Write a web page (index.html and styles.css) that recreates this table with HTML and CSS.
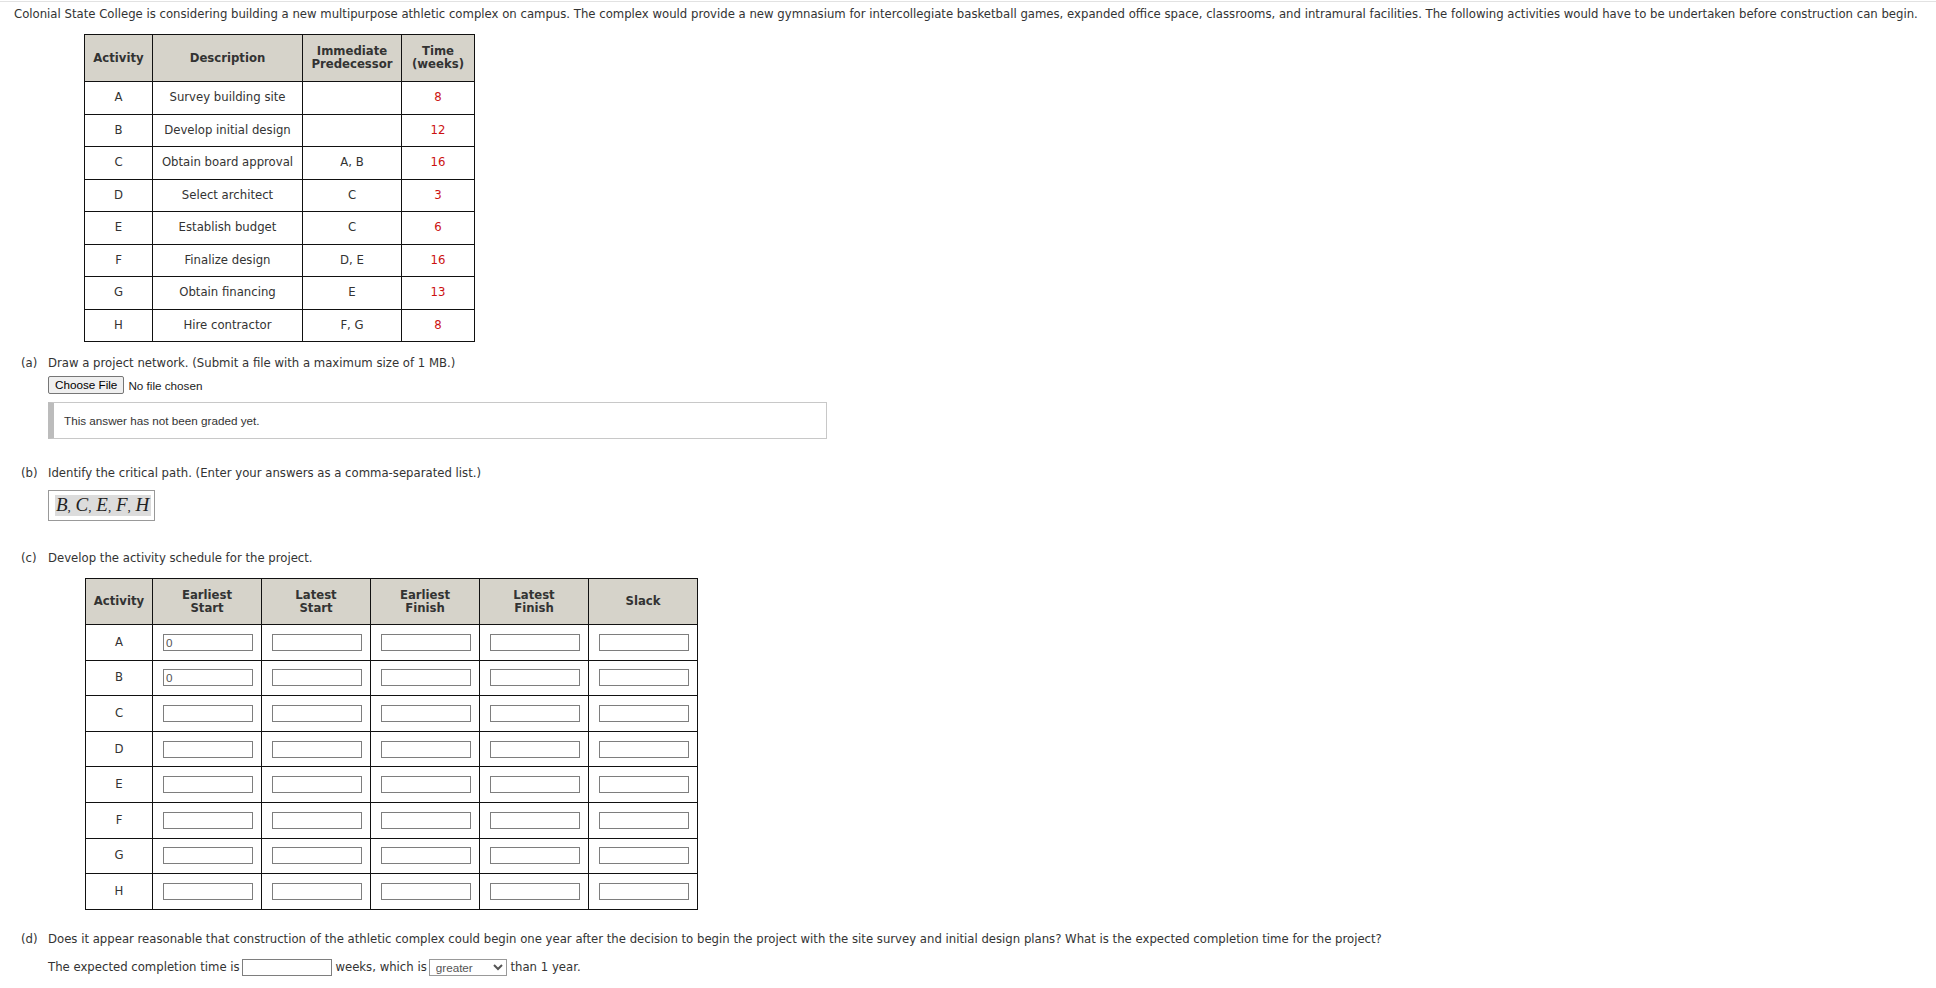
FILE: index.html
```html
<!DOCTYPE html>
<html>
<head>
<meta charset="utf-8">
<link rel="stylesheet" href="styles.css">
</head>
<body>
<div class="page">
  <p class="intro">Colonial State College is considering building a new multipurpose athletic complex on campus. The complex would provide a new gymnasium for intercollegiate basketball games, expanded office space, classrooms, and intramural facilities. The following activities would have to be undertaken before construction can begin.</p>

  <table class="grid activities">
    <colgroup><col class="c1"><col class="c2"><col class="c3"><col class="c4"></colgroup>
    <thead>
      <tr><th>Activity</th><th>Description</th><th>Immediate<br>Predecessor</th><th>Time<br>(weeks)</th></tr>
    </thead>
    <tbody>
      <tr><td>A</td><td>Survey building site</td><td></td><td class="red">8</td></tr>
      <tr><td>B</td><td>Develop initial design</td><td></td><td class="red">12</td></tr>
      <tr><td>C</td><td>Obtain board approval</td><td>A, B</td><td class="red">16</td></tr>
      <tr><td>D</td><td>Select architect</td><td>C</td><td class="red">3</td></tr>
      <tr><td>E</td><td>Establish budget</td><td>C</td><td class="red">6</td></tr>
      <tr><td>F</td><td>Finalize design</td><td>D, E</td><td class="red">16</td></tr>
      <tr><td>G</td><td>Obtain financing</td><td>E</td><td class="red">13</td></tr>
      <tr><td>H</td><td>Hire contractor</td><td>F, G</td><td class="red">8</td></tr>
    </tbody>
  </table>

  <div class="q qa">
    <span class="qlabel">(a)</span>
    <div class="qbody">
      <div class="qtext">Draw a project network. (Submit a file with a maximum size of 1 MB.)</div>
      <div class="file"><span class="filebtn">Choose File</span><span class="filename">No file chosen</span></div>
      <div class="graded">This answer has not been graded yet.</div>
    </div>
  </div>

  <div class="q qb">
    <span class="qlabel">(b)</span>
    <div class="qbody">
      <div class="qtext">Identify the critical path. (Enter your answers as a comma-separated list.)</div>
      <div class="answer"><span class="hl"><i>B</i><span class="cm">,</span> <i>C</i><span class="cm">,</span> <i>E</i><span class="cm">,</span> <i>F</i><span class="cm">,</span> <i>H</i></span></div>
    </div>
  </div>

  <div class="q qc">
    <span class="qlabel">(c)</span>
    <div class="qbody">
      <div class="qtext">Develop the activity schedule for the project.</div>
    </div>
  </div>

  <table class="grid schedule">
    <colgroup><col class="s1"><col class="s2"><col class="s2"><col class="s2"><col class="s2"><col class="s2"></colgroup>
    <thead>
      <tr><th>Activity</th><th>Earliest<br>Start</th><th>Latest<br>Start</th><th>Earliest<br>Finish</th><th>Latest<br>Finish</th><th>Slack</th></tr>
    </thead>
    <tbody>
      <tr><td>A</td><td><input class="cell" value="0"></td><td><input class="cell"></td><td><input class="cell"></td><td><input class="cell"></td><td><input class="cell"></td></tr>
      <tr><td>B</td><td><input class="cell" value="0"></td><td><input class="cell"></td><td><input class="cell"></td><td><input class="cell"></td><td><input class="cell"></td></tr>
      <tr><td>C</td><td><input class="cell"></td><td><input class="cell"></td><td><input class="cell"></td><td><input class="cell"></td><td><input class="cell"></td></tr>
      <tr><td>D</td><td><input class="cell"></td><td><input class="cell"></td><td><input class="cell"></td><td><input class="cell"></td><td><input class="cell"></td></tr>
      <tr><td>E</td><td><input class="cell"></td><td><input class="cell"></td><td><input class="cell"></td><td><input class="cell"></td><td><input class="cell"></td></tr>
      <tr><td>F</td><td><input class="cell"></td><td><input class="cell"></td><td><input class="cell"></td><td><input class="cell"></td><td><input class="cell"></td></tr>
      <tr><td>G</td><td><input class="cell"></td><td><input class="cell"></td><td><input class="cell"></td><td><input class="cell"></td><td><input class="cell"></td></tr>
      <tr><td>H</td><td><input class="cell"></td><td><input class="cell"></td><td><input class="cell"></td><td><input class="cell"></td><td><input class="cell"></td></tr>
    </tbody>
  </table>

  <div class="q qd">
    <span class="qlabel">(d)</span>
    <div class="qbody">
      <div class="qtext">Does it appear reasonable that construction of the athletic complex could begin one year after the decision to begin the project with the site survey and initial design plans? What is the expected completion time for the project?</div>
      <div class="qtext line2">The expected completion time is<input class="inline"> weeks, which is<select class="sel"><option>greater</option><option>less</option></select> than 1 year.</div>
    </div>
  </div>
</div>
</body>
</html>
```

FILE: styles.css
```css
html, body {
  margin: 0;
  padding: 0;
  background: #fff;
}
body {
  font-family: "DejaVu Sans", Verdana, sans-serif;
  font-size: 11.7px;
  color: #333;
}
.page {
  margin-top: 1px;
  border-top: 1px solid #e2e2e2;
}
.intro {
  margin: 0;
  padding: 5px 0 0 14px;
  line-height: 14px;
  white-space: nowrap;
}
.grid {
  border-collapse: collapse;
  table-layout: fixed;
  border: 1px solid #111;
}
.grid th, .grid td {
  border: 1px solid #111;
  text-align: center;
  padding: 0;
  line-height: 13px;
}
.grid th {
  background: #d6d3ca;
  font-weight: bold;
  color: #333;
}
.activities {
  margin: 13px 0 0 84px;
  width: 391px;
}
.activities .c1 { width: 68px; }
.activities .c2 { width: 150px; }
.activities .c3 { width: 99px; }
.activities .c4 { width: 73px; }
.activities thead tr { height: 47px; }
.activities tbody tr { height: 32.5px; }
.red { color: #cc1111; }

.q {
  display: flex;
  padding-left: 21px;
}
.qlabel {
  width: 27px;
  flex: none;
  line-height: 14px;
}
.qbody { flex: 1; }
.qtext { line-height: 14px; }
.qa { margin-top: 14px; }
.file {
  margin-top: 6px;
  display: flex;
  align-items: center;
  height: 18px;
  font-family: "Liberation Sans", Arial, sans-serif;
  font-size: 11.7px;
  color: #222;
}
.filebtn {
  height: 16px;
  line-height: 16px;
  padding: 0 6px;
  border: 1px solid #767676;
  border-radius: 2px;
  background: #efefef;
  color: #000;
}
.filename { margin-left: 4px; }
.graded {
  margin-top: 8px;
  width: 762px;
  height: 35px;
  line-height: 35px;
  border: 1px solid #c8c8c8;
  border-left: 6px solid #bcbcbc;
  padding-left: 10px;
  font-family: "Liberation Sans", Arial, sans-serif;
  font-size: 11.7px;
  color: #333;
}
.qb { margin-top: 27px; }
.answer {
  margin-top: 10px;
  display: inline-flex;
  align-items: center;
  width: 99px;
  height: 29px;
  padding-left: 6px;
  border: 1px solid #999;
  font-family: "Liberation Serif", "Times New Roman", serif;
  font-size: 19px;
  color: #222;
}
.hl {
  background: #dcdcdc;
  line-height: 19px;
  padding: 0 2px 0 1px;
  white-space: pre;
}
.hl i { font-style: italic; }
.cm { font-size: 13px; }
.qc { margin-top: 30px; }
.schedule {
  margin: 13px 0 0 85px;
  width: 613px;
}
.schedule .s1 { width: 67px; }
.schedule .s2 { width: 109px; }
.schedule thead tr { height: 46px; }
.schedule tbody tr { height: 35.6px; }
.cell {
  box-sizing: border-box;
  width: 90px;
  height: 17px;
  margin: 0;
  padding: 0 2px;
  border: 1px solid #7e7e7e;
  font-family: "Liberation Sans", Arial, sans-serif;
  font-size: 11.7px;
  color: #555;
  vertical-align: middle;
  display: block;
  margin-left: 10px;
}
.qd { margin-top: 22px; }
.line2 {
  margin-top: 13px;
  display: flex;
  align-items: center;
  white-space: pre;
}
.inline {
  box-sizing: border-box;
  width: 90px;
  height: 17px;
  margin: 0 0 0 2px;
  padding: 0 2px;
  border: 1px solid #7e7e7e;
}
.sel {
  box-sizing: border-box;
  width: 78px;
  height: 17px;
  margin: 0 0 0 2px;
  padding: 0 0 0 2px;
  border: 1px solid #999;
  border-radius: 0;
  background: #fff;
  font-family: "Liberation Sans", Arial, sans-serif;
  font-size: 11.7px;
  color: #555;
}
```
